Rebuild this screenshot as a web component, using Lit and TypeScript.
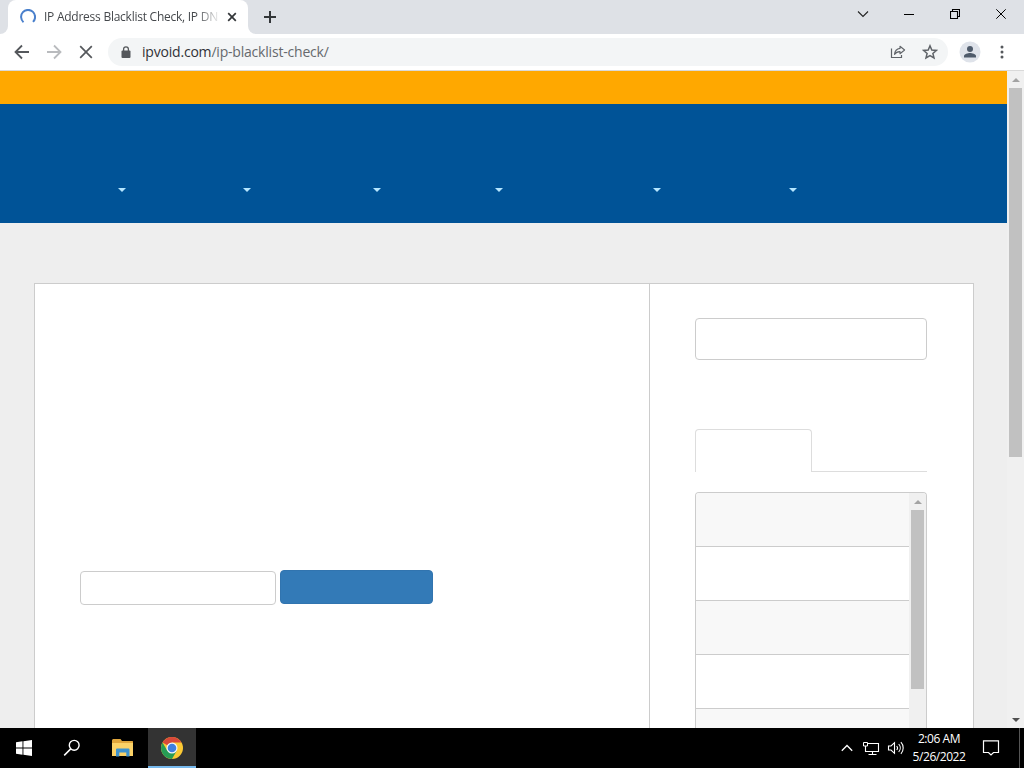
import { LitElement, html, css, svg } from 'lit'
import { customElement, property } from 'lit/decorators.js'

// width of each top menu entry, the caret sits at its right end
const MENU = [92, 125, 130, 122, 158, 136]
const ROWS = [0, 1, 2, 3, 4]

const icon = (w: number, h: number, body: unknown) => html`
  <svg width=${w} height=${h} viewBox="0 0 ${w} ${h}" fill="none">${body}</svg>
`

const spinner = icon(16, 16, svg`
  <path d="M3.5 13.2A7 7 0 1 1 13 12.9" stroke="#4a80cc" stroke-width="2"/>`)
const tabClose = icon(10, 10, svg`<path d="M1.2 1.2l7.6 7.6M8.8 1.2L1.2 8.8" stroke="#333639" stroke-width="1.7"/>`)
const plus = icon(14, 14, svg`<path d="M7 1v12M1 7h12" stroke="#333639" stroke-width="2"/>`)
const chevron = icon(12, 12, svg`<path d="M1 3.5l5 5 5-5" stroke="#222" stroke-width="1.1"/>`)
const minimize = icon(10, 10, svg`<path d="M0 5.5h10" stroke="#000"/>`)
const restore = icon(10, 10, svg`<path d="M.5 2.5h7v7h-7zM2.5 2V.5h7v7H8" stroke="#000" stroke-width="1.1"/>`)
const close = icon(10, 10, svg`<path d="M.3.3l9.4 9.4M9.7.3L.3 9.7" stroke="#000"/>`)

const back = icon(16, 16, svg`<path d="M15 8H2M8 1.5L1.5 8 8 14.5" stroke="#55585c" stroke-width="1.8"/>`)
const forward = icon(16, 16, svg`<path d="M1 8h13M8 1.5L14.5 8 8 14.5" stroke="#b9bbbe" stroke-width="1.8"/>`)
const stop = icon(14, 14, svg`<path d="M1.2 1.2l11.6 11.6M12.8 1.2L1.2 12.8" stroke="#55585c" stroke-width="1.7"/>`)
const lock = icon(10, 13, svg`
  <rect x=".5" y="4.5" width="9" height="7.5" rx="1" fill="#55585c"/>
  <path d="M2.6 5V3.3a2.4 2.4 0 0 1 4.8 0V5" stroke="#55585c" stroke-width="1.3"/>`)
const share = icon(16, 14, svg`
  <path d="M1.5 3.5v9h10V10" stroke="#5f6368" stroke-width="1.2"/>
  <path d="M10 1.3L14.6 5 10 8.7V6.6C7.5 6.5 5.8 7.5 4.5 9.4 4.8 6 6.8 3.8 10 3.4z" stroke="#5f6368" stroke-width="1.1" stroke-linejoin="round"/>`)
const star = icon(16, 16, svg`
  <path d="M8 1.8l1.8 4.2 4.6.4-3.5 3 1.1 4.5-4-2.4-4 2.4 1.1-4.5-3.5-3 4.6-.4z" stroke="#5f6368" stroke-width="1.5"/>`)
const avatar = icon(22, 22, svg`
  <circle cx="11" cy="11" r="10.5" fill="#dfe3ea"/>
  <circle cx="11" cy="8" r="3" fill="#4f5b6b"/>
  <path d="M5 16.5V15c0-2 4-3 6-3s6 1 6 3v1.5z" fill="#4f5b6b"/>`)
const dots = icon(4, 14, svg`
  <g fill="#55585c"><circle cx="2" cy="2" r="1.5"/><circle cx="2" cy="7" r="1.5"/><circle cx="2" cy="12" r="1.5"/></g>`)

const start = icon(16, 16, svg`
  <path d="M0 2.2L6.5 1.3V7.5H0zM7.4 1.2L16 0V7.5H7.4zM0 8.4H6.5V14.7L0 13.8zM7.4 8.4H16V16L7.4 14.8z" fill="#fff"/>`)
const search = icon(18, 18, svg`
  <circle cx="11.2" cy="6.3" r="4.9" stroke="#fff" stroke-width="1.4"/>
  <path d="M7.7 9.9L1.2 16.4" stroke="#fff" stroke-width="1.5"/>`)
const explorer = icon(22, 18, svg`
  <path d="M0 1.5Q0 0 1.2 0H8.5L10 2H20.5Q21 2 21 3V17H0z" fill="#e0a63c"/>
  <path d="M0 4H21V17H0z" fill="#fbd267"/>
  <path d="M4 17.5V10.5Q4 9.5 5 9.5H16.5Q17.5 9.5 17.5 10.5V17.5H14.3V13.5H7.3V17.5z" fill="#3e93cf"/>`)
const chrome = icon(24, 24, svg`
  <circle cx="12" cy="12" r="11" fill="#fbc934"/>
  <path d="M12 12L2.5 6.5A11 11 0 0 1 21.5 6.5H12z" fill="#d9493a"/>
  <path d="M2.5 6.5A11 11 0 0 0 12 23L16.7 14.7 7.3 14.7z" fill="#269c55"/>
  <circle cx="12" cy="12" r="5.5" fill="#f4f6f8"/>
  <circle cx="12" cy="12" r="4.3" fill="#3f7fe0"/>`)
const trayUp = icon(12, 8, svg`<path d="M.8 6.8L6 1.5l5.2 5.3" stroke="#fff" stroke-width="1.3"/>`)
const network = icon(18, 15, svg`
  <path d="M5.5 2.5H16.5V10.5H3.5V6M10.5 10.5v3M6.5 13.5h8" stroke="#fff" stroke-width="1.1"/>
  <path d="M1.5 1.5h4v3.5h-4zM3.5 5v4" stroke="#fff"/>`)
const volume = icon(18, 14, svg`
  <path d="M1.5 5H4l3.5-3.3v10.6L4 9H1.5z" stroke="#fff" stroke-width="1.1"/>
  <path d="M9.7 5a3 3 0 0 1 0 4M11.7 3a6 6 0 0 1 0 8M13.9 1.2a8.5 8.5 0 0 1 0 11.6" stroke="#fff" stroke-width="1.1"/>`)
const notice = icon(18, 16, svg`
  <path d="M1.5 .8H16.5V12.5H11.5L9 15 6.5 12.5H1.5z" stroke="#fff" stroke-width="1.2"/>`)

@customElement('scroll-bar')
export class ScrollBar extends LitElement {
  @property({ type: Number }) thumb = 100

  static styles = css`
    :host {
      display: flex;
      flex-direction: column;
      align-items: center;
      width: 17px;
      flex: none;
      background: #f0f0f0;
    }
    .arrow {
      height: 17px;
      flex: none;
      display: flex;
      align-items: center;
    }
    .thumb {
      width: 13px;
      flex: none;
      background: #c1c1c1;
    }
    .gap {
      flex: 1;
    }
    svg {
      display: block;
    }
  `

  render() {
    return html`
      <div class="arrow">${icon(8, 4, svg`<path d="M0 4l4-4 4 4z" fill="#a3a3a3"/>`)}</div>
      <div class="thumb" style="height:${this.thumb}px"></div>
      <div class="gap"></div>
      <div class="arrow">${icon(8, 4, svg`<path d="M0 0h8l-4 4z" fill="#505050"/>`)}</div>
    `
  }
}

@customElement('app-root')
export class AppRoot extends LitElement {
  static styles = css`
    :host {
      display: flex;
      flex-direction: column;
      width: 1024px;
      height: 768px;
      overflow: hidden;
      font-family: 'Open Sans', 'Noto Sans', sans-serif;
    }
    * {
      box-sizing: border-box;
    }
    svg {
      display: block;
      flex: none;
    }
    .strip {
      height: 34px;
      flex: none;
      display: flex;
      background: #dee1e6;
    }
    .lead {
      width: 8px;
      background: #fff;
    }
    .lead::before,
    .trail::before {
      content: '';
      display: block;
      height: 34px;
      background: #dee1e6;
      border-radius: 0 0 8px 0;
    }
    .trail {
      width: 8px;
      background: #fff;
    }
    .trail::before {
      border-radius: 0 0 0 8px;
    }
    .tab {
      width: 240px;
      display: flex;
      align-items: center;
      padding: 0 11px 0 12px;
      background: #fff;
      border-radius: 8px 8px 0 0;
    }
    .title {
      width: 175px;
      margin: 0 8px;
      white-space: nowrap;
      font-size: 12px;
      line-height: 20px;
      letter-spacing: -0.25px;
      color: #45484c;
      -webkit-mask-image: linear-gradient(90deg, #000 152px, transparent 177px);
      mask-image: linear-gradient(90deg, #000 152px, transparent 177px);
    }
    .new {
      display: flex;
      align-items: center;
      padding-left: 7px;
    }
    .controls {
      display: flex;
      margin-left: auto;
    }
    .controls span {
      width: 46px;
      height: 28px;
      display: flex;
      align-items: center;
      justify-content: center;
    }
    .toolbar {
      height: 37px;
      flex: none;
      display: flex;
      align-items: center;
      padding: 0 20px 0 14px;
      background: #fff;
      border-bottom: 1px solid #d9d9d9;
    }
    .nav {
      display: flex;
      align-items: center;
      gap: 16px;
      width: 94px;
    }
    .nav svg:last-child {
      margin-left: 1px;
    }
    .omnibox {
      width: 840px;
      height: 28px;
      display: flex;
      align-items: center;
      padding: 0 10px 0 13px;
      border-radius: 14px;
      background: #f3f5f6;
    }
    .url {
      margin: 0 auto 0 11px;
      font-size: 14px;
      line-height: 20px;
      letter-spacing: -0.2px;
      color: #66696d;
      white-space: nowrap;
    }
    .url b {
      font-weight: 400;
      color: #303236;
    }
    .actions {
      display: flex;
      align-items: center;
      gap: 16px;
    }
    .avatar {
      margin: 0 19px 0 11px;
    }
    .view {
      flex: 1;
      min-height: 0;
      display: flex;
    }
    .page {
      flex: 1;
      display: flex;
      flex-direction: column;
      background: #eee;
      overflow: hidden;
    }
    .notice {
      height: 33px;
      flex: none;
      background: #ffa800;
    }
    .header {
      height: 119px;
      flex: none;
      display: flex;
      padding: 84px 0 0 34px;
      background: #005397;
    }
    .item {
      display: flex;
      justify-content: flex-end;
    }
    .card {
      flex: 1;
      width: 940px;
      min-height: 0;
      margin: 60px 0 0 34px;
      display: flex;
      background: #fff;
      border: 1px solid #ccc;
      border-bottom: 0;
    }
    .main {
      flex: 1;
      padding: 286px 0 0 45px;
    }
    .form {
      display: flex;
      gap: 4px;
    }
    .field {
      width: 196px;
      height: 34px;
      margin-top: 1px;
      border: 1px solid #ccc;
      border-radius: 4px;
    }
    .submit {
      width: 153px;
      height: 34px;
      border: 1px solid #3174af;
      border-radius: 4px;
      background: #337ab7;
    }
    .side {
      width: 324px;
      display: flex;
      flex-direction: column;
      padding: 34px 46px 0 45px;
      border-left: 1px solid #ccc;
    }
    .search {
      height: 42px;
      flex: none;
      border: 1px solid #ccc;
      border-radius: 4px;
    }
    .tabs {
      height: 43px;
      flex: none;
      display: flex;
      margin: 69px 0 20px;
    }
    .active {
      width: 117px;
      border: 1px solid #ddd;
      border-bottom: 0;
      border-radius: 4px 4px 0 0;
    }
    .rest {
      flex: 1;
      border-bottom: 1px solid #ddd;
    }
    .list {
      flex: 1;
      min-height: 0;
      display: flex;
      border: 1px solid #ccc;
      border-bottom: 0;
      border-radius: 4px 4px 0 0;
      overflow: hidden;
    }
    .rows {
      flex: 1;
      height: 290px;
    }
    .row {
      height: 54px;
      border-bottom: 1px solid #ccc;
    }
    .row:nth-child(odd) {
      background: #f8f8f8;
    }
    .list scroll-bar {
      height: 290px;
    }
    .taskbar {
      height: 40px;
      flex: none;
      display: flex;
      background: #000;
      color: #fff;
    }
    .app {
      width: 48px;
      display: flex;
      align-items: center;
      justify-content: center;
    }
    .folder {
      width: 52px;
      padding-left: 2px;
    }
    .open {
      background: #333;
      border-bottom: 2px solid #76b9ed;
      padding-top: 2px;
    }
    .tray {
      display: flex;
      align-items: center;
      margin-left: auto;
    }
    .status {
      display: flex;
      align-items: center;
      gap: 7px;
    }
    .status svg:first-child {
      margin-right: 2px;
    }
    .clock {
      width: 56px;
      margin-left: 6px;
      font-size: 12px;
      line-height: 18px;
      letter-spacing: -0.45px;
      text-align: center;
      white-space: nowrap;
    }
    .bell {
      margin-left: 15px;
    }
    .desktop {
      width: 5px;
      height: 40px;
      margin-left: 19px;
      border-left: 1px solid #555;
    }
  `

  render() {
    return html`
      <div class="strip">
        <div class="lead"></div>
        <div class="tab">${spinner}<span class="title">IP Address Blacklist Check, IP DN</span>${tabClose}</div>
        <div class="trail"></div>
        <div class="new">${plus}</div>
        <div class="controls">
          ${[chevron, minimize, restore, close].map((c) => html`<span>${c}</span>`)}
        </div>
      </div>
      <div class="toolbar">
        <div class="nav">${back}${forward}${stop}</div>
        <div class="omnibox">
          ${lock}
          <span class="url"><b>ipvoid.com</b>/ip-blacklist-check/</span>
          <div class="actions">${share}${star}</div>
        </div>
        <div class="avatar">${avatar}</div>
        ${dots}
      </div>
      <div class="view">
        <div class="page">
          <div class="notice"></div>
          <div class="header">
            ${MENU.map(
              (w) => html`
                <div class="item" style="width:${w}px">
                  ${icon(8, 4, svg`<path d="M0 0h8l-4 4z" fill="#b5e6ff"/>`)}
                </div>
              `
            )}
          </div>
          <div class="card">
            <div class="main">
              <div class="form">
                <div class="field"></div>
                <div class="submit"></div>
              </div>
            </div>
            <div class="side">
              <div class="search"></div>
              <div class="tabs">
                <div class="active"></div>
                <div class="rest"></div>
              </div>
              <div class="list">
                <div class="rows">${ROWS.map(() => html`<div class="row"></div>`)}</div>
                <scroll-bar .thumb=${179}></scroll-bar>
              </div>
            </div>
          </div>
        </div>
        <scroll-bar .thumb=${369}></scroll-bar>
      </div>
      <div class="taskbar">
        <div class="app">${start}</div>
        <div class="app">${search}</div>
        <div class="app folder">${explorer}</div>
        <div class="app open">${chrome}</div>
        <div class="tray">
          <div class="status">${trayUp}${network}${volume}</div>
          <div class="clock">2:06 AM<br />5/26/2022</div>
          <div class="bell">${notice}</div>
          <div class="desktop"></div>
        </div>
      </div>
    `
  }
}

declare global {
  interface HTMLElementTagNameMap {
    'app-root': AppRoot
    'scroll-bar': ScrollBar
  }
}
